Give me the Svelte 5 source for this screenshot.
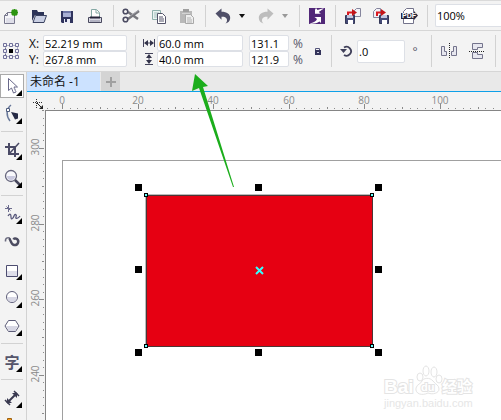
<script>
    const icons = {
        new: `<path d="M6.500 6.500h7v11h-10v-8z" fill="#f4f4f8" stroke="#77778c"/><path d="M3.500 9.500h3v-3" fill="none" stroke="#77778c"/><path d="M5 12h8v5H5z" fill="#dedee8"/><path d="M13.500 3v7M10 6.500h7M11 4l5 5M16 4l-5 5" stroke="#2c9410" stroke-width="2"/>`,
        open: `<path d="M3 15V4h5l1 2h6v3H6z" fill="#2c3357"/><path d="M6.500 9.500h11l-2.500 7H4z" fill="#c9cfe3" stroke="#39415f"/>`,
        save: `<path d="M4 5h12v12H5l-1-1z" fill="#30345e"/><path d="M6 5h8v6H6z" fill="#a9b0d4"/><path d="M6 5h8v2H6z" fill="#6d75a5"/><path d="M7 13h6v4H7z" fill="#eceef8"/><path d="M8 13h2v3H8z" fill="#30345e"/>`,
        print: `<path d="M6.500 11V3.500h5l3 3V11" fill="#fff" stroke="#84a8a4"/><path d="M11 4v3h3" fill="none" stroke="#84a8a4"/><path d="M3.500 11.500h13v5h-13z" fill="#d9dae5" stroke="#49495e"/><path d="M5 11.500h10" stroke="#25253a" stroke-width="2"/><path d="M5 15h10" stroke="#8c8ca0"/>`,
        cut: `<path d="M7 6l10 7M7 13l11-8" stroke="#77777d" stroke-width="2.500"/><path d="M9 10l9-6" stroke="#aaaab0"/><circle cx="4.500" cy="5.500" r="2.300" fill="none" stroke="#4b4b62" stroke-width="1.600"/><circle cx="4.500" cy="13.500" r="2.300" fill="none" stroke="#4b4b62" stroke-width="1.600"/>`,
        copy: `<path d="M3.500 4.500h8v9h-8z" fill="#eaf3f2" stroke="#8eb0ac"/><path d="M5 7h5M5 9h4M5 11h4" stroke="#a2bfbc"/><path d="M8.500 7.500h5l3 3v7h-8z" fill="#fff" stroke="#55556b"/><path d="M10 11h4M10 13h5M10 15h5" stroke="#55556b"/>`,
        paste: `<path d="M3 5h12v12H3z" fill="#b9b9b9"/><path d="M6 3h6v3H6z" fill="#9f9f9f"/><path d="M5 7h8v1H5z" fill="#d4d4d4"/><path d="M8.500 8.500h5l3 3v6h-8z" fill="#eee" stroke="#a9a9a9"/><path d="M10 12h4M10 14h5M10 16h5" stroke="#b3b3b3"/>`,
        undo: `<path d="M2.500 7.500l6-5v3.300c5.500 0 8.700 2.500 8.700 6.200 0 3-2.200 5-4.700 5.500 1.500-1.500 1.800-3 1.300-4.500-.7-1.700-2.500-2.300-5.300-2.200v3z" fill="#4f4f68"/>`,
        redo: `<path d="M17.500 7.500l-6-5v3.300c-5.500 0-8.700 2.500-8.700 6.200 0 3 2.200 5 4.700 5.500-1.500-1.500-1.800-3-1.300-4.500.7-1.700 2.500-2.300 5.300-2.200v3z" fill="#bdbdbd"/>`,
        launch: `<path d="M2 2h16v16H2z" fill="#512878"/><path d="M8 2v5.500h6L11.500 6l5.500-3.500L9.500 5z" fill="#fff"/><path d="M9 2L8 7.500h5l-2-1.500 6-4-6.500 2z" fill="#fff"/><path d="M2.500 17.500c4-1 7-2.500 7.500-4.500L7.500 11H14v6l-1.500-1.500c-3 2-6.500 2.500-10 2z" fill="#fff"/>`,
        import: `<path d="M11.500 4.500l2-2h4v8h-6z" fill="#f1f1f7" stroke="#85859d"/><path d="M2.500 9.500h9v8h-9z" fill="#454b77" stroke="#343858"/><path d="M4 9h6v3H4z" fill="#c2c7e0"/><path d="M5 14h5v4H5z" fill="#fff"/><path d="M5 9V6.500h5" fill="none" stroke="#d91920" stroke-width="2"/><path d="M9 3l5 3.500-5 3.500z" fill="#c21419"/>`,
        export: `<path d="M2.500 5.500l3-3h4v9h-7z" fill="#f1f1f7" stroke="#85859d"/><path d="M8.500 9.500h9v8h-9z" fill="#454b77" stroke="#343858"/><path d="M10 9h6v3h-6z" fill="#c2c7e0"/><path d="M11 14h5v4h-5z" fill="#fff"/><path d="M6 10V6.500h5" fill="none" stroke="#d91920" stroke-width="2"/><path d="M10 3l5 3.500-5 3.500z" fill="#c21419"/>`,
        pdf: `<path d="M4.500 17.500v-12l3-3h7v15z" fill="#fff" stroke="#73738b"/><path d="M2 7h13V5l4 4.500-4 4.500v-1H2z" fill="#292940"/>`,
        object: `<path d="M4.500 4.500h12v11h-12z" fill="none" stroke="#6a6a90" stroke-dasharray="2 1"/><path d="M2.500 2.500h3v3h-3zM8.500 2.500h3v3h-3zM14.500 2.500h3v3h-3zM2.500 8.500h3v3h-3zM14.500 8.500h3v3h-3zM2.500 14.500h3v3h-3zM8.500 14.500h3v3h-3zM14.500 14.500h3v3h-3z" fill="#f3f3f8" stroke="#70709a"/><path d="M8 8h4v4H8z" fill="#000"/>`,
        mirrorH: `<path d="M2.500 5.500h3v5h2v4h-5zM17.500 5.500h-3v5h-2v4h5z" fill="#e7e7ef" stroke="#74748c"/><path d="M10.500 2v16" stroke="#222" stroke-dasharray="1 1"/>`,
        mirrorV: `<path d="M5.500 2.500h10v4h-5v2h-5zM5.500 17.500h10v-4h-5v-2h-5z" fill="#e7e7ef" stroke="#74748c"/><path d="M2 10.500h16" stroke="#222" stroke-dasharray="1 1"/>`,
        pick: `<path d="M7.500 3.500v12l3-2.500 2 5 2.500-1-2-5h3.500z" fill="#fff" stroke="#69698a"/><path d="M13 13l2 4" stroke="#a8a8bd"/>`,
        shape: `<path d="M10 2C5 6 5 13 9 18" fill="none" stroke="#68789a" stroke-width="1.500"/><path d="M5.500 5.500h3v3h-3z" fill="#fff" stroke="#4e5c7d"/><path d="M10 9l7 1.500v5l-3 1z" fill="#252a45"/>`,
        crop: `<path d="M8 4v11h10M4 8h10v10" fill="none" stroke="#4b4b66" stroke-width="2"/><path d="M8 15l10-11" stroke="#4b4b66" stroke-width="1.500"/>`,
        zoom: `<circle cx="10" cy="9" r="5.500" fill="#f8f8fc" stroke="#65657c" stroke-width="1.300"/><path d="M6 9h8a4 4 0 0 1-8 0" fill="#c9c9df"/><path d="M14 13l5 5" stroke="#46465b" stroke-width="2.500"/>`,
        freehand: `<path d="M7.500 2v7M4 5.500h7M5.500 3.500l4 4" stroke="#6c6c8d"/><path d="M7 13c2-3 3-2 3 1s2 2 3-1 3-1 2 1 2 2 4-1" fill="none" stroke="#56567a" stroke-width="1.300"/>`,
        artistic: `<path d="M4.500 10.500c-.5-4 3.500-5 5-2" fill="none" stroke="#6c6c80" stroke-width="1.500"/><path d="M8 7.500c2 1 1.500 6 5 6.500 4 .5 5.500-4 3-6-1.500-1-3-.5-3.500.5" fill="none" stroke="#4c4c61" stroke-width="2.500"/>`,
        rectangle: `<path d="M5.500 6.500h11v11h-11z" fill="#fff" stroke="#4d4d70"/><path d="M6 12h10v5H6z" fill="#dedeea"/>`,
        ellipse: `<circle cx="11" cy="10" r="5.500" fill="#fff" stroke="#5c5c78"/><path d="M6 10h10a5 5 0 0 1-10 0" fill="#d7d7e4"/>`,
        polygon: `<path d="M7.500 5.500h7l3.500 5.500-3.500 5.500h-7L4 11z" fill="#fff" stroke="#5c5c78"/><path d="M5 11h12l-3 5H8z" fill="#d7d7e4"/>`,
        dimension: `<path d="M6 16L16 6" stroke="#393950" stroke-width="2"/><path d="M6 11v5h5zM11 6h5v5z" fill="#393950"/><path d="M4 13l5 5M13 4l5 5" stroke="#393950" stroke-width="1.500"/>`,
        connector: `<path d="M6.500 3.500h4v5h-4z" fill="#f79a1a" stroke="#9a6114"/>`,
    }

    const fileButtons = [
        ['new', 'New'],
        ['open', 'Open'],
        ['save', 'Save'],
        ['print', 'Print'],
    ]
    const editButtons = [
        ['cut', 'Cut'],
        ['copy', 'Copy'],
        ['paste', 'Paste'],
    ]
    const toolGroups = [
        ['pick', 'shape'],
        ['crop', 'zoom'],
        ['freehand', 'artistic', 'rectangle', 'ellipse', 'polygon'],
        ['text'],
        ['dimension', 'connector'],
    ]

    let tool = $state('pick')
    let x = $state('52.219 mm')
    let y = $state('267.8 mm')
    let width = $state('60.0 mm')
    let height = $state('40.0 mm')
    let scaleX = $state('131.1')
    let scaleY = $state('121.9')
    let angle = $state('.0')
    let zoom = $state('100%')

    let canvasWidth = $state(0)
    let canvasHeight = $state(0)

    // one step is 2 mm, a label every ten steps
    const STEP = 7.56

    function ticks(origin, first, length) {
        const list = []
        for (let i = first; origin + i * STEP < length; i++) {
            list.push({
                i,
                pos: Math.round(origin + i * STEP),
                size: i % 10 === 0 ? 5 : i % 5 === 0 ? 2 : 1,
                label: i % 10 === 0 && origin + i * STEP < length - 10,
            })
        }
        return list
    }

    let rulerX = $derived(ticks(17, -2, canvasWidth))
    let rulerY = $derived(ticks(38, -5, canvasHeight))

    const handles = [
        [89, 73],
        [209, 73],
        [329, 73],
        [89, 155],
        [329, 155],
        [89, 238],
        [209, 238],
        [329, 238],
    ]
    const nodes = [
        [98, 82],
        [324, 82],
        [98, 233],
        [324, 233],
    ]
</script>

{#snippet iconButton(name, label)}
    <button class="icon-button" aria-label={label}>
        <svg width="20" height="20" viewBox="0 0 20 20">{@html icons[name]}</svg>
        {#if name === 'pdf'}<span class="pdf-tag">PDF</span>{/if}
    </button>
{/snippet}

{#snippet dropArrow(label, dim)}
    <button class="drop-arrow" class:dim aria-label={label}>
        <svg width="6" height="4" viewBox="0 0 6 4">
            <path d="M0 0h6L3 4z" fill="currentColor" />
        </svg>
    </button>
{/snippet}

<div class="app">
    <header class="toolbar standard">
        {#each fileButtons as [name, label]}
            {@render iconButton(name, label)}
        {/each}
        <span class="divider"></span>
        {#each editButtons as [name, label]}
            {@render iconButton(name, label)}
        {/each}
        <span class="divider"></span>
        <div class="split">
            {@render iconButton('undo', 'Undo')}
            {@render dropArrow('Undo list', false)}
        </div>
        <div class="split">
            {@render iconButton('redo', 'Redo')}
            {@render dropArrow('Redo list', true)}
        </div>
        <span class="divider"></span>
        {@render iconButton('launch', 'Launch')}
        <span class="divider"></span>
        {@render iconButton('import', 'Import')}
        {@render iconButton('export', 'Export')}
        {@render iconButton('pdf', 'Publish to PDF')}
        <span class="divider"></span>
        <input class="zoom-level" aria-label="Zoom level" bind:value={zoom} />
    </header>

    <div class="toolbar property">
        {@render iconButton('object', 'Object origin')}
        <div class="fields position">
            <label for="pos-x">X:</label>
            <input id="pos-x" bind:value={x} />
            <label for="pos-y">Y:</label>
            <input id="pos-y" bind:value={y} />
        </div>
        <span class="divider"></span>
        <div class="fields size">
            <label for="width" aria-label="Width">
                <svg width="12" height="12" viewBox="0 0 12 12">
                    <path d="M.5 2v8M11.500 2v8M2 6h8" stroke="#44445c" />
                    <path d="M1 6l4-3v6zM11 6L7 3v6z" fill="#33334a" />
                </svg>
            </label>
            <input id="width" bind:value={width} />
            <input class="scale" aria-label="Scale X" bind:value={scaleX} />
            <span class="unit">%</span>
            <label for="height" aria-label="Height">
                <svg width="12" height="12" viewBox="0 0 12 12">
                    <path d="M2 .5h8M2 11.500h8M6 2v8" stroke="#44445c" />
                    <path d="M6 1L3 5h6zM6 11L3 7h6z" fill="#33334a" />
                </svg>
            </label>
            <input id="height" bind:value={height} />
            <input class="scale" aria-label="Scale Y" bind:value={scaleY} />
            <span class="unit">%</span>
        </div>
        <button class="lock" aria-label="Lock ratio">
            <svg width="10" height="10" viewBox="0 0 10 10">
                <path d="M2.500 5V2.500h4V5" fill="none" stroke="#55557a" />
                <path d="M2 4h6v5H2z" fill="#34345a" />
                <path d="M4 6h2v1H4z" fill="#c9c9dd" />
            </svg>
        </button>
        <span class="divider"></span>
        <div class="rotation">
            <label for="angle" aria-label="Angle">
                <svg width="16" height="16" viewBox="0 0 16 16">
                    <path d="M5 4.500a4.500 4.500 0 1 1 0 7.500" fill="none" stroke="#40405a" stroke-width="1.800" />
                    <path d="M1 6h7L4.500 10z" fill="#40405a" />
                </svg>
            </label>
            <input id="angle" bind:value={angle} />
            <span class="degree">°</span>
        </div>
        <span class="divider"></span>
        {@render iconButton('mirrorH', 'Mirror horizontally')}
        {@render iconButton('mirrorV', 'Mirror vertically')}
        <span class="divider"></span>
    </div>

    <div class="workspace">
        <nav class="toolbox">
            {#each toolGroups as group, g}
                {#if g > 0}<hr />{/if}
                {#each group as name}
                    <button
                        class="tool"
                        class:active={tool === name}
                        aria-label={name}
                        onclick={() => (tool = name)}
                    >
                        {#if name === 'text'}
                            <span class="glyph">字</span>
                        {:else}
                            <svg width="22" height="22" viewBox="0 0 22 22">{@html icons[name]}</svg>
                        {/if}
                        {#if name !== 'artistic'}<span class="flyout"></span>{/if}
                    </button>
                {/each}
            {/each}
        </nav>

        <main class="document">
            <div class="tabs">
                <button class="tab">未命名 -1</button>
                <button class="add-tab" aria-label="New document">
                    <svg width="12" height="12" viewBox="0 0 12 12">
                        <path d="M6 1v10M1 6h10" stroke="#a0a0a0" stroke-width="2" />
                    </svg>
                </button>
            </div>

            <div class="stage">
                <div class="corner">
                    <svg width="12" height="12" viewBox="0 0 12 12">
                        <path d="M4.500 1v10M1 4.500h10" stroke="#333" stroke-dasharray="1 1" />
                        <path d="M5 5l4 4" stroke="#222" />
                        <path d="M11 7v4H7z" fill="#222" />
                    </svg>
                </div>
                <svg class="ruler-x">
                    {#each rulerX as t}
                        <rect x={t.pos} y={17 - t.size} width="1" height={t.size} />
                        {#if t.label}
                            <text x={t.pos} y="12">{Math.abs(t.i * 2)}</text>
                        {/if}
                    {/each}
                </svg>
                <svg class="ruler-y">
                    {#each rulerY as t}
                        <rect x={17 - t.size} y={t.pos} width={t.size} height="1" />
                        {#if t.label}
                            <text transform="translate(12 {t.pos - 1}) rotate(-90)">{300 - t.i * 2}</text>
                        {/if}
                    {/each}
                </svg>
                <div class="canvas" bind:clientWidth={canvasWidth} bind:clientHeight={canvasHeight}>
                    <svg class="drawing">
                        <rect class="page" x="16.500" y="49.500" width="794" height="1123" />
                        <rect x="99" y="83" width="228" height="153" fill="#bbb" />
                        <rect x="100.500" y="84.500" width="226" height="151" fill="#e60012" stroke="#4d3535" />
                        {#each handles as [hx, hy]}
                            <rect x={hx} y={hy} width="7" height="7" />
                        {/each}
                        {#each nodes as [nx, ny]}
                            <rect x={nx} y={ny} width="4" height="4" />
                            <rect x={nx + 1} y={ny + 1} width="2" height="2" fill="#6ff" />
                        {/each}
                        <path d="M210 156l7 7M217 156l-7 7" stroke="#3ff" stroke-width="2" />
                        <g class="watermark">
                            <text class="brand" x="338" y="282">Bai</text>
                            <ellipse cx="374" cy="266" rx="3" ry="4" />
                            <ellipse cx="380" cy="260" rx="3" ry="5" />
                            <ellipse cx="388" cy="261" rx="3" ry="5" />
                            <ellipse cx="393" cy="268" rx="3" ry="4" />
                            <path d="M370 277c1-4 5-4 6-7s8-4 11 0 6 4 6 8-6 6-11 4c-6 3-13 1-12-5z" />
                            <text class="du" x="375" y="280">du</text>
                            <text class="cjk" x="396" y="281">经验</text>
                            <text class="host" x="338" y="296">jingyan.baidu.com</text>
                        </g>
                    </svg>
                </div>
            </div>

            <svg class="pointer" width="44" height="115" viewBox="0 0 44 115">
                <path d="M4 1l13 12-5 1 31 100h-1L8 15l-7 3z" fill="#1bad1b" />
            </svg>
        </main>
    </div>
</div>

<style>
    :global(body) {
        margin: 0;
    }

    .app {
        display: flex;
        flex-direction: column;
        height: 100vh;
        overflow: hidden;
        background: #f3f3f3;
        color: #111;
        font-family: 'Open Sans', 'Noto Sans CJK SC', sans-serif;
        font-size: 11px;
    }

    button {
        display: flex;
        align-items: center;
        justify-content: center;
        padding: 0;
        border: none;
        background: transparent;
        color: inherit;
        font: inherit;
    }

    input {
        box-sizing: border-box;
        min-width: 0;
        padding: 0 1px;
        border: 1px solid #dde0e6;
        border-radius: 2px;
        background: #fff;
        color: #000;
        font: inherit;
    }

    svg {
        display: block;
        flex-shrink: 0;
    }

    .toolbar {
        box-sizing: border-box;
        display: flex;
        flex-shrink: 0;
        align-items: center;
        gap: 8px;
        padding-left: 1px;
        border-bottom: 1px solid #d6d6d6;
    }

    .standard {
        height: 31px;
        border-top: 1px solid #dadada;
    }

    .property {
        height: 41px;
    }

    .divider {
        flex-shrink: 0;
        width: 1px;
        height: 22px;
        margin: 0 -1px;
        border-right: 1px solid #d2d2d2;
    }

    .property .divider {
        height: 32px;
    }

    .icon-button {
        position: relative;
        flex-shrink: 0;
        width: 20px;
        height: 20px;
    }

    .pdf-tag {
        position: absolute;
        top: 6px;
        left: 3px;
        color: #fff;
        font-family: 'Liberation Sans', sans-serif;
        font-size: 7px;
        font-weight: 700;
        line-height: 8px;
    }

    .split {
        display: flex;
        gap: 3px;
    }

    .drop-arrow {
        width: 12px;
        height: 20px;
    }

    .drop-arrow.dim {
        color: #999;
    }

    .zoom-level {
        flex: 1;
        height: 23px;
        border-right: none;
        border-radius: 2px 0 0 2px;
    }

    .fields {
        display: grid;
        flex-shrink: 0;
        grid-auto-rows: 16px;
        align-items: center;
        column-gap: 2px;
    }

    .fields input {
        height: 16px;
    }

    .position {
        grid-template-columns: 12px 84px;
        font-size: 12px;
    }

    .position input {
        font-size: 11px;
    }

    .size {
        grid-template-columns: 12px 86px 44px 14px;
    }

    .scale {
        margin-left: 4px;
    }

    .unit,
    .degree {
        color: #555568;
        font-size: 12px;
        text-align: center;
    }

    .lock {
        width: 10px;
        height: 20px;
    }

    .rotation {
        display: flex;
        align-items: center;
        gap: 2px;
    }

    .rotation input {
        width: 48px;
        height: 23px;
    }

    .degree {
        width: 16px;
    }

    .workspace {
        display: flex;
        flex: 1;
        min-height: 0;
    }

    .toolbox {
        box-sizing: border-box;
        display: flex;
        flex-direction: column;
        flex-shrink: 0;
        align-items: center;
        gap: 4px;
        width: 27px;
        padding: 2px 2px 0 0;
        border-right: 1px solid #d2d2d2;
        overflow: hidden;
    }

    .toolbox hr {
        flex-shrink: 0;
        width: 22px;
        margin: 1px 0 2px;
        border: none;
        border-top: 1px solid #d2d2d2;
    }

    .tool {
        position: relative;
        box-sizing: border-box;
        flex-shrink: 0;
        width: 24px;
        height: 24px;
        border: 1px solid transparent;
    }

    .tool.active {
        border-color: #aaa;
        background: #fff;
    }

    .glyph {
        color: #55556b;
        font-size: 15px;
        font-weight: 700;
        line-height: 20px;
    }

    .flyout {
        position: absolute;
        right: 1px;
        bottom: 1px;
        border: 3px solid #000;
        border-top-color: transparent;
        border-left-color: transparent;
    }

    .document {
        position: relative;
        display: flex;
        flex: 1;
        flex-direction: column;
        min-width: 0;
    }

    .tabs {
        display: flex;
        flex-shrink: 0;
        gap: 1px;
        height: 19px;
        border-bottom: 1px solid #0ea0e8;
        background: #e9e9e9;
    }

    .tab {
        width: 73px;
        padding-left: 3px;
        justify-content: flex-start;
        background: #cce2ff;
        font-size: 12px;
        line-height: 19px;
    }

    .add-tab {
        width: 19px;
        background: #d4d4d4;
    }

    .stage {
        display: grid;
        flex: 1;
        grid-template: 18px 1fr / 18px 1fr;
        min-height: 0;
        overflow: hidden;
    }

    .corner {
        display: flex;
        align-items: flex-end;
        justify-content: flex-end;
        padding-right: 1px;
    }

    .ruler-x,
    .ruler-y {
        fill: #8a8a8a;
        font-size: 10px;
        text-anchor: middle;
    }

    .ruler-x {
        width: 100%;
        height: 18px;
    }

    .ruler-y {
        width: 18px;
        height: 100%;
    }

    .canvas {
        min-width: 0;
        min-height: 0;
        border-top: 1px solid #858585;
        border-left: 1px solid #858585;
        background: #fff;
    }

    .drawing {
        width: 100%;
        height: 100%;
    }

    .page {
        fill: none;
        stroke: #a0a0a0;
    }

    .watermark {
        fill: #fff;
        stroke: #e4e4e4;
        font-family: 'Liberation Sans', 'Noto Sans CJK SC', sans-serif;
        font-weight: 700;
    }

    .watermark text {
        paint-order: stroke;
        stroke-width: 2px;
    }

    .brand {
        font-size: 19px;
    }

    .du {
        font-size: 11px;
    }

    .cjk {
        font-size: 15px;
    }

    .watermark .host {
        fill: #e6e6e6;
        stroke: none;
        font-size: 11px;
        font-weight: 400;
    }

    .pointer {
        position: absolute;
        top: 1px;
        left: 164px;
    }
</style>
